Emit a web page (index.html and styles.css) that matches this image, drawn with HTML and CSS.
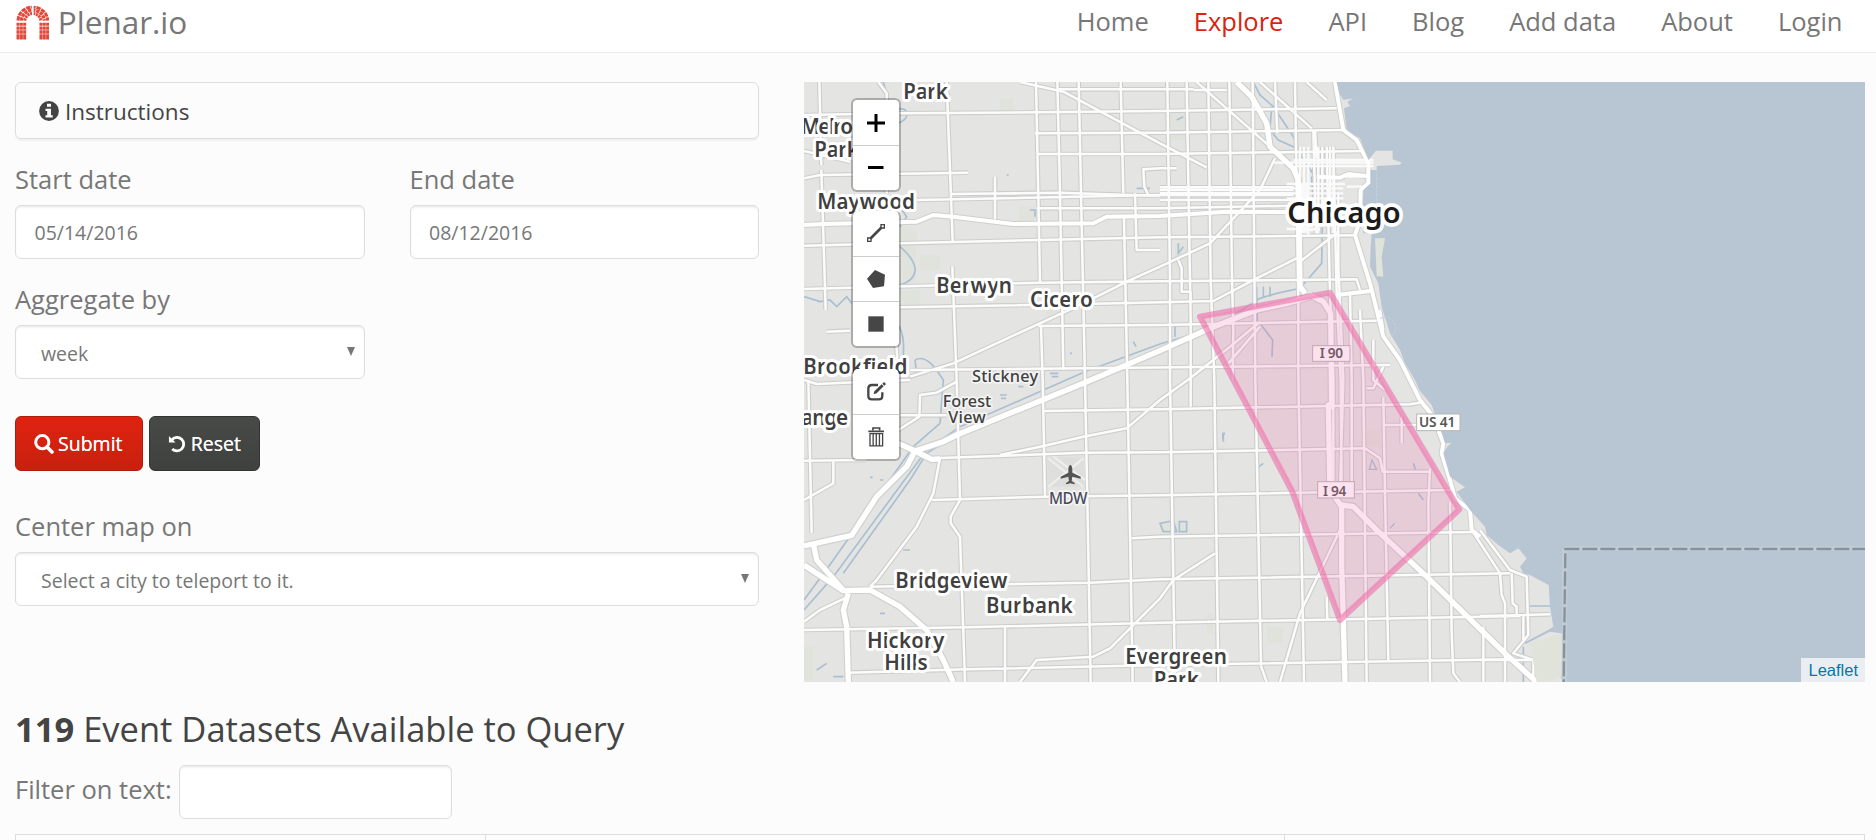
FILE: index.html
```html
<!DOCTYPE html>
<html lang="en">
<head>
<meta charset="utf-8">
<title>Plenar.io</title>
<link rel="stylesheet" href="styles.css">
</head>
<body>
<header class="navbar">
  <a class="brand">
    <svg class="logo" viewBox="0 0 100 104" width="33.3" height="34.6">
      <g fill="none" stroke="#e0493a">
        <path d="M6 53V104M16 53V104M26 53V104M75 53V104M85 53V104M95 53V104" stroke-width="9" stroke-dasharray="9.5 1.8 10 1.8 10 1.8 16 2"/>
        <path d="M6 47C8 -7 93 -7 95 47" stroke-width="9" stroke-dasharray="13 2.5"/>
        <path d="M16 47C20 5 81 5 85 47" stroke-width="10" stroke-dasharray="10 2.3"/>
        <path d="M26 47C32 18 69 18 75 47" stroke-width="9" stroke-dasharray="7 2"/>
      </g>
      <path d="M50.500 0V30" stroke="#fff" stroke-width="5"/>
    </svg>
    <span class="brand-name">Plenar.io</span>
  </a>
  <nav class="nav">
    <a>Home</a><a class="active">Explore</a><a>API</a><a>Blog</a><a>Add data</a><a>About</a><a>Login</a>
  </nav>
</header>

<main class="page">
  <div class="columns">
    <form class="controls">
      <div class="panel">
        <svg viewBox="0 0 20 20" width="20" height="20"><circle cx="10" cy="10" r="9.900" fill="#444"/><path d="M8 2.800h4v3H8zM6.500 7.800H12v6.400h1.700v2.200H6.500v-2.200h1.700V10H6.500z" fill="#fcfcfc"/></svg>
        <span>Instructions</span>
      </div>
      <div class="row">
        <div class="field"><label>Start date</label><input class="control" type="text" value="05/14/2016"></div>
        <div class="field"><label>End date</label><input class="control" type="text" value="08/12/2016"></div>
      </div>
      <div class="row">
        <div class="field"><label>Aggregate by</label><div class="control select">week</div></div>
        <div class="field"></div>
      </div>
      <div class="buttons">
        <button type="button" class="btn primary">
          <svg viewBox="0 0 20 20" width="20" height="20"><circle cx="8.300" cy="8.200" r="6.600" fill="none" stroke="#fff" stroke-width="3"/><path d="M13 13l5 5" stroke="#fff" stroke-width="3.600" stroke-linecap="round"/></svg><span>Submit</span>
        </button>
        <button type="button" class="btn inverse">
          <svg viewBox="0 0 20 20" width="20" height="20"><path d="M4.300 5.200A7.200 7.200 0 1 1 4.500 15.400" fill="none" stroke="#fff" stroke-width="3"/><path d="M1 1.500V8.500H8z" fill="#fff"/></svg><span>Reset</span>
        </button>
      </div>
      <div class="field"><label>Center map on</label><div class="control select">Select a city to teleport to it.</div></div>
    </form>

    <div class="map">
      <svg class="tiles" viewBox="12 6 3183 1800" width="1061" height="600" preserveAspectRatio="none">
        <defs>
          <g id="minor">
            <path d="M58 6L64 255M64 270L77 690M25 900L35 1360M440 6L458 485M457 560L470 900L480 1260L452 1310V1330L480 1370L487 1570L495 1806M585 290V418M708 6L720 605M723 735L728 900L735 1250M772 6L780 340L790 870M836 6L855 900L862 1260L872 1806M962 6L970 340M972 415L982 900L998 1806M1080 265L1030 268L1033 320L1045 345M1005 340L1010 510H1080M235 6L260 40V340M285 725L292 840"/>
            <path d="M12 105L300 100L705 97L1080 93L1610 85M705 160L1080 158L1640 150M710 222L1080 222L1690 213M775 28H1180M12 295L60 285L505 278M350 360L1080 345H1480M455 342L780 338L1080 348M710 385H1080L1480 377M12 497L300 490L720 480L1080 472L1670 466M12 627L720 608L1080 604L1670 598L1680 630M300 682L850 672L1080 667L1240 663L1370 595L1500 530M80 755L150 752M330 890L460 850L850 670L980 605L1080 560L1230 490L1380 330L1425 235M715 738L1080 735L1730 722M330 870L850 865L1770 855M0 210L150 245M1080 340H1480M1080 322H1480M1080 330H1480M1080 360H1480"/>
            <path d="M660 6L790 35L1080 190L1220 262M1190 6L1410 200M1380 6L1535 145M1520 6L1580 60M12 1142L200 1140M100 1145V1210L12 1260M295 1050L358 1010L360 945L410 938L470 905M12 900L50 912L200 905L330 900M300 1006H440M420 1135L400 1240L350 1340L230 1500L210 1520M600 1125L720 1100L850 1070L980 1045L1080 960L1170 895L1290 800L1380 725M395 1260L735 1250L1080 1246L1955 1230M400 1135L850 1118L1080 1117L1695 1105L1740 1135L1748 1175H1890M730 993L1080 988L1830 973L1860 968M210 1520L870 1508L1080 1498L2130 1480M12 1650L500 1642L1080 1628L2160 1608M145 1778L500 1768L1080 1755L2130 1738M615 1642V1806M660 1806L710 1740L880 1730L930 1705L1080 1555L1120 1500L1245 1420M995 1375L1080 1370L2030 1356M1500 1600L1440 1806M1500 1600L1620 1350M1580 1550L1582 1620M145 1550L60 1590L12 1625M1382 1756L1400 1806M1500 545L1615 455"/>
            <path d="M1102 6L1110 600V900L1125 1806M1160 6L1172 720V980M1225 6L1232 600L1243 900L1255 1806M1288 6L1296 600L1300 750L1298 900M1285 850L1380 740M1358 6L1366 900L1383 1756M1135 540L1145 565V635H1172V665M1485 6L1495 660V890L1512 1806M1180 30H1280M1080 265H1130M1720 780V900L1755 930M1425 6L1432 160M1545 150L1550 235"/>
            <path d="M1540 150L1548 460M1555 200V460M1567 200V440M1580 200L1590 640M1600 200L1610 640M1615 340V560L1630 900L1620 1240M1590 640L1600 900V1230M1610 640L1622 900L1625 1240M1650 640L1655 900V1230M1680 690L1690 900L1700 1806M1750 950L1755 1240L1765 1740M1805 1010V1090M1890 1165L1885 1270L1890 1806M1950 1265L1955 1660L1960 1780L1980 1806M2015 1350L2100 1480L2105 1545L2115 1570L2115 1806M2040 1350L2130 1470L2180 1490L2185 1665L2140 1720L2200 1740V1806M2135 1480L2138 1570L2150 1580V1605M2040 1608L2250 1603M2040 1740H2210M2170 1610V1680M2050 1640V1806M1750 1035H1850M1700 925H1720L1750 860M1740 690L1750 750"/>
          </g>
          <g id="grid">
            <path d="M1460 312H1635M1470 325H1630M1460 340H1630M1460 355H1630M1480 240H1720M1420 248H1720M1490 258H1720M1635 290H1690M1640 320H1690M1500 200V460M1512 200V460M1525 200V470M1590 200V380M1600 200V380M1505 315V460M1520 315V460M1600 300V460M1490 450H1540M1460 447H1560"/>
          </g>
          <g id="major">
            <path d="M12 435L70 432L350 425L400 405L460 410L640 432L880 430L920 410L1080 408L1280 395L1500 397M1605 6L1630 150L1670 180L1705 250V310L1682 330L1680 420L1665 465L1710 610L1750 770L1800 840L1860 960L1900 1010L1930 1090L1925 1120L1950 1200L1965 1255L2010 1290L2015 1350L2040 1370M1610 645L1710 633M1550 290L1620 293L1645 282L1700 288"/>
          </g>
          <g id="motorway">
            <path d="M12 1398L155 1366L230 1250L320 1160L345 1113L430 1085L470 1065L850 910L1080 812L1230 745L1370 690L1460 670L1530 650M12 1455L130 1532L210 1530L300 1580L380 1650L430 1740L460 1806M40 1390L50 1440L130 1530M145 1540L130 1590L140 1640L145 1806M295 1090L345 1113L395 1138L420 1137M1310 6L1355 50L1400 130L1410 200L1480 265L1495 300L1500 620L1515 640M1530 645L1570 665L1592 700L1595 980L1585 975L1590 1230L1625 1280L1625 1460L1630 1620L1635 1806M1625 1275L1660 1280L1730 1350L1880 1490L2120 1725L2210 1806"/>
          </g>
        </defs>
        <rect x="12" y="6" width="3183" height="1800" fill="#e4e4e3"/>
        <g fill="#e0e3db">
          <path d="M300 440L350 450L345 610L310 600ZM360 525H420V570H360ZM655 380H700V430H655ZM1095 95H1155V180H1095ZM1125 490L1165 480V640L1125 560ZM600 55H640V100H600ZM300 630H360V680H310ZM1080 1330H1160V1360H1080ZM1700 1050H1740V1100H1700ZM1220 1600H1240V1660H1220ZM1400 1640H1450V1690H1400ZM740 690H780V710H740ZM12 1700H40V1800H12ZM1230 1100V1140H1270V1100Z"/>
        </g>
        <!-- Rivers, canals and ponds -->
        <g fill="none" stroke="#a9bfd1" stroke-width="5">
          <path d="M250 6L265 60V100C330 60 340 120 290 130M300 440L320 410L300 380M300 500C370 560 350 600 300 615M290 730C320 760 310 830 305 880M12 650L60 665L90 660L110 680L140 650L155 670M345 840C380 820 410 870 430 900L420 1030M345 840L350 880L320 900"/>
          <path d="M860 873L1080 792L1240 745L1380 655L1430 640L1500 625L1565 550L1567 440L1545 360V290L1505 230L1480 170L1420 80L1380 45L1360 6M1415 80L1410 150L1435 180L1490 205M1370 620L1372 720L1418 780L1416 830M1390 620V650M1410 620V650M1125 735V770"/>
          <path d="M860 873L480 1040L380 1110L100 1490L12 1590M420 1030L340 1100L100 1440L12 1560M470 1065L380 1120L330 1200L130 1480M1535 290L1545 440M1630 286L1710 280M2190 1578H2255M2175 1690L2260 1645M2170 1700V1806"/>
          <path d="M750 880H775M755 890H775M600 945H620M603 955H618M655 920H670M210 1192H218M240 1200H250M310 1410H330M240 1600H255M50 1770L80 1750M100 1790H130M1080 1330L1120 1322L1130 1355H1090ZM1138 1325H1160V1355H1138ZM690 390H705V410M1010 325H1050M1000 785L1008 800M810 820H816M620 285H626M1135 490V520L1150 500M1130 120L1150 110M1270 1085V1060H1275M1370 1165L1390 1150M1840 1150L1850 1180M1855 1240L1870 1260M1290 1330"/>
          <path d="M1268 1078V1062H1275M1708 1168H1730L1716 1140Z M1784 1330L1770 1345" stroke-width="4"/>
        </g>
        <use href="#minor" class="case-minor"/><use href="#major" class="case-major"/><use href="#motorway" class="case-motorway"/>
        <use href="#minor" class="fill-minor"/><use href="#grid" class="fill-grid"/><use href="#major" class="fill-major"/><use href="#motorway" class="fill-motorway"/>
        <!-- Airport apron -->
        <path d="M742 1130H855V1220H742Z" fill="#dededd"/><path d="M745 1135L850 1220M745 1220L850 1135M760 1130L855 1200" stroke="#eee" stroke-width="7"/>
        <path d="M811 1155C815 1155 817 1162 817 1170V1178L842 1190V1196L817 1190L815 1203L824 1209V1213L811 1210L798 1213V1209L807 1203L805 1190L782 1196V1190L805 1178V1170C805 1162 807 1155 811 1155Z" fill="#555"/>
        <!-- Lake Michigan -->
        <path d="M1610 6L1618 40L1630 60L1660 55L1642 65L1650 78L1632 85L1640 150L1680 175L1705 240L1728 212H1778V238L1805 248L1800 254L1730 258L1730 270H1712V310L1690 330L1688 400L1690 460L1715 460L1712 500L1710 560L1735 610L1745 680L1770 760L1800 810L1815 850L1845 900L1858 930L1895 975L1920 1040L1935 1090L1955 1088L1942 1100L1930 1120L1950 1190L1995 1222L1970 1235L2010 1290L2055 1340L2060 1365L2095 1395L2130 1420L2155 1405L2180 1435L2160 1460L2170 1480L2190 1485L2246 1515L2250 1580L2260 1640L2180 1690L2250 1655L2285 1660V1740L2270 1770L2290 1806H3195V6Z" fill="#b8c5d2"/>
        <path d="M1725 475H1755L1745 530L1750 590L1730 588L1728 540Z" fill="#dfe3da"/>
        <path d="M2190 1690L2285 1662V1790L2240 1806H2210Z" fill="#dfe3da"/>
        <path d="M1730 270V370M1740 715C1790 700 1800 760 1770 770" fill="none" stroke="#c8d1d8" stroke-width="3" stroke-dasharray="8 4"/>
        <path d="M2294 1406H3195" class="border-halo"/><path d="M2294 1406V1806" class="border-halo"/>
        <path d="M2293 1407H3195" class="border-line"/><path d="M2296 1420L2291 1806" class="border-line"/>
        <!-- Place names -->
        <g class="places">
          <text x="310" y="56" textLength="134">Park</text>
          <text x="2" y="163" textLength="157">Melro</text>
          <text x="43" y="231" textLength="134">Park</text>
          <text x="52" y="387" textLength="293">Maywood</text>
          <text x="409" y="638" textLength="227">Berwyn</text>
          <text x="690" y="682" textLength="188">Cicero</text>
          <text x="10" y="881" textLength="312">Brookfield</text>
          <text x="4" y="1036" textLength="140">ange</text>
          <text x="286" y="1523" textLength="336">Bridgeview</text>
          <text x="558" y="1599" textLength="260">Burbank</text>
          <text x="201" y="1703" textLength="232">Hickory</text>
          <text x="253" y="1771" textLength="130">Hills</text>
          <text x="976" y="1752" textLength="305">Evergreen</text>
          <text x="1061" y="1821" textLength="136">Park</text>
        </g>
        <g class="small-places">
          <text x="516" y="907" textLength="198">Stickney</text>
          <text x="428" y="980" textLength="146">Forest</text>
          <text x="445" y="1030" textLength="112">View</text>
          <text x="747" y="1272" textLength="115" class="airport">MDW</text>
        </g>
        <text x="1462" y="428" textLength="340" class="city">Chicago</text>
        <g class="shields">
          <rect x="1538" y="797" width="112" height="47"/><text x="1559" y="835" textLength="70">I 90</text>
          <rect x="1553" y="1205" width="110" height="49"/><text x="1569" y="1247" textLength="70">I 94</text>
          <rect x="1850" y="1002" width="130" height="50"/><text x="1857" y="1041" textLength="109">US 41</text>
        </g>
        <!-- Query area -->
        <path d="M1200 710L1590 638L1978 1289L1620 1620L1476 1233Z" class="selection"/>
      </svg>

      <div class="toolbar zoom">
        <a><svg viewBox="0 0 18 18" width="18" height="18"><path d="M9 0V18M0 9H18" stroke="#000" stroke-width="3"/></svg></a>
        <a><svg viewBox="0 0 18 18" width="18" height="18"><path d="M1 8.500H16.500" stroke="#000" stroke-width="3"/></svg></a>
      </div>
      <div class="toolbar shapes">
        <a><svg viewBox="0 0 54 54" width="18" height="18"><g fill="none" stroke="#464646"><path d="M9 45L45 9" stroke-width="8"/><path d="M2 42H12V52H2ZM42 2H52V12H42Z" fill="#fff" stroke-width="4"/></g></svg></a>
        <a><svg viewBox="0 0 54 54" width="18" height="18"><path d="M24 0L54 14L51 49L18 54L0 26Z" fill="#464646"/></svg></a>
        <a><svg viewBox="0 0 54 54" width="18" height="18"><path d="M4 4H50V50H4Z" fill="#464646"/></svg></a>
      </div>
      <div class="toolbar edit">
        <a><svg viewBox="0 0 57 57" width="19" height="19"><path d="M33 9H15Q4 9 4 20V41Q4 52 15 52H35Q46 52 46 41V31" fill="none" stroke="#464646" stroke-width="7"/><path d="M20 37L22 28L44 7L50 13L29 34ZM46 5L51 0L57 6L52 11Z" fill="#464646"/></svg></a>
        <a><svg viewBox="0 0 50 60" width="16.600" height="20"><path d="M15 10V3H35V10M1 13H49" fill="none" stroke="#464646" stroke-width="5"/><path d="M6 19V57H44V19M15.500 18V57M25 18V57M34.500 18V57M4 20H46" fill="none" stroke="#464646" stroke-width="4"/></svg></a>
      </div>
      <div class="attribution"><a>Leaflet</a></div>
    </div>
  </div>

  <h3 class="heading"><strong>119</strong> Event Datasets Available to Query</h3>
  <div class="filter"><label>Filter on text:</label><input class="control" type="text"></div>
  <div class="table"><div></div><div></div><div></div></div>
</main>
</body>
</html>
```

FILE: styles.css
```css
* { box-sizing: border-box; }
body {
  margin: 0;
  height: 840px;
  overflow: hidden;
  background: #fcfcfc;
  color: #777;
  font-family: "Open Sans", sans-serif;
  font-size: 25.5px;
}
.navbar {
  display: flex;
  justify-content: space-between;
  height: 53px;
  padding: 0 33.500px 0 15.500px;
  background: #fff;
  border-bottom: 1.500px solid #ebebeb;
}
.brand { display: flex; gap: 9px; padding-top: 5px; }
.logo { display: block; }
.brand-name { font-size: 31.500px; line-height: 34px; }
.nav { display: flex; gap: 45px; line-height: 42px; }
.nav .active { color: #d9230f; }

.page { padding: 29px 11px 0 15px; }
.columns { display: flex; justify-content: space-between; height: 600px; }
.controls { width: 744px; }
.panel {
  display: flex;
  align-items: center;
  gap: 6px;
  height: 57px;
  padding: 1px 0 0 23px;
  border: 1.500px solid #ddd;
  border-radius: 6px;
  box-shadow: 0 1.500px 1.500px rgba(0, 0, 0, .05);
  color: #444;
  font-size: 22.500px;
}
.row { display: flex; gap: 45px; padding-top: 27px; }
.field { flex: 1; }
.field label { display: block; height: 39px; line-height: 26px; }
.control {
  display: block;
  width: 100%;
  height: 54px;
  padding: 0 18.500px;
  background: #fff;
  border: 1.500px solid #ddd;
  border-radius: 6px;
  box-shadow: inset 0 1.500px 1.500px rgba(0, 0, 0, .075);
  color: #777;
  font-family: inherit;
  font-size: 19.500px;
}
.select {
  display: flex;
  align-items: center;
  justify-content: space-between;
  padding: 3px 9px 0 25px;
}
.select::after {
  content: "";
  margin-top: -5px;
  border: 4.500px solid transparent;
  border-top: 9px solid #777;
  border-bottom: 0;
}
.buttons { display: flex; gap: 6px; padding: 37px 0 42px; }
.btn {
  display: flex;
  align-items: center;
  gap: 4px;
  height: 55px;
  padding: 0 18px;
  border: 1.500px solid;
  border-radius: 6px;
  color: #fff;
  font: 19.500px "Open Sans", sans-serif;
  text-shadow: 0 0 .5px #fff;
}
.primary { width: 128px; background: linear-gradient(#de2310, #ca200e); border-color: #b01c0c; }
.inverse { width: 111px; background: linear-gradient(#484a48, #3f413f); border-color: #333; }

.map { position: relative; width: 1061px; height: 600px; overflow: hidden; }
.tiles { display: block; }
.tiles use { fill: none; stroke-linejoin: round; }
.case-minor { stroke: #cdcdcc; stroke-width: 14; }
.fill-minor { stroke: #fcfcfc; stroke-width: 7.500; }
.fill-grid { stroke: #fafafa; stroke-width: 7; }
.case-major { stroke: #cfcfce; stroke-width: 18; }
.fill-major { stroke: #fff; stroke-width: 12; }
.case-motorway { stroke: #d0d0cf; stroke-width: 23; }
.fill-motorway { stroke: #fff; stroke-width: 16; }
.border-halo { stroke: #c0ccd2; stroke-width: 16; }
.border-line { stroke: #84939f; stroke-width: 7; stroke-dasharray: 45 9; }
.tiles text { font-family: "Noto Sans", "Open Sans", sans-serif; font-weight: 600; }
.places, .small-places, .city { fill: #404040; stroke: #fff; stroke-width: 18; stroke-linejoin: round; paint-order: stroke; }
.places { font-size: 62px; }
.small-places { font-size: 49px; stroke: #f4f4f4; stroke-width: 10; }
.tiles .small-places text { font-weight: 500; }
.tiles .small-places .airport { font-size: 46px; fill: #4a4a5c; }
.city { font-size: 87px; fill: #1c1c1c; stroke-width: 22; }
.shields rect { fill: #fff; stroke: #b5b5b5; stroke-width: 3; }
.shields text { font-size: 41px; fill: #555; }
.selection { fill: #f06eaa; fill-opacity: .2; stroke: #f06eaa; stroke-opacity: .6; stroke-width: 18; stroke-linejoin: round; }

.toolbar {
  position: absolute;
  left: 47px;
  width: 50px;
  border: 2.500px solid rgba(0, 0, 0, .25);
  border-radius: 6px;
  background: #fff;
  background-clip: padding-box;
}
.toolbar a { display: flex; align-items: center; justify-content: center; height: 45px; }
.toolbar a + a { border-top: 1.500px solid #ccc; }
.zoom { top: 16px; }
.shapes { top: 128.500px; border-top: 0; }
.edit { top: 287px; border-top: 0; }
.attribution {
  position: absolute;
  right: 0;
  bottom: 0;
  height: 24px;
  padding: 0 7px;
  background: rgba(255, 255, 255, .7);
  color: #0078a8;
  font: 16.500px/25px "Liberation Sans", Arial, sans-serif;
}

.heading { margin: 23px 0 0; height: 60px; color: #444; font-size: 34.500px; font-weight: 400; line-height: 48px; }
.filter { display: flex; gap: 7px; }
.filter label { line-height: 48px; }
.filter .control { width: 273px; }
.table { display: grid; grid-template-columns: 469px 799px 1fr; height: 20px; margin-top: 15px; border: 1.500px solid #ddd; }
.table div + div { border-left: 1.500px solid #ddd; }
```
